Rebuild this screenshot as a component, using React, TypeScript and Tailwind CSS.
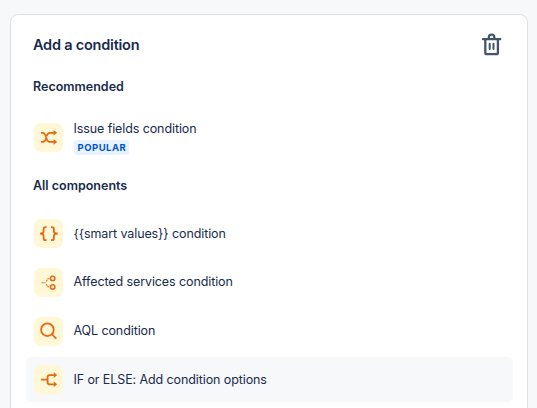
import type { ReactNode } from "react";

interface ConditionItem {
  key: string;
  label: string;
  icon: ReactNode;
  popular?: boolean;
  active?: boolean;
}

function TrashIcon() {
  return (
    <svg width="24" height="24" viewBox="0 0 24 24" fill="none" stroke="#44546f" strokeWidth="2.3">
      <path d="M3 6.2h17.2" strokeLinecap="round" />
      <path d="M5.3 6.4v13.3a1.4 1.4 0 0 0 1.4 1.4h9.8a1.4 1.4 0 0 0 1.4-1.4V6.4" />
      <path d="M8.9 6V4.1a2.7 2.5 0 0 1 5.4 0V6" />
      <path d="M9.7 10.8v5.2M13.5 10.8v5.2" strokeWidth="2" strokeLinecap="round" />
    </svg>
  );
}

function ShuffleIcon() {
  return (
    <svg width="29" height="29" viewBox="0 0 29 29" fill="none" stroke="#e56910" strokeWidth="1.7">
      <path d="M7 9.8h1.8c4.2 0 2.4 9.1 6.9 9.1h4.9M7 18.9h1.8c2 0 2.8-1.5 3.4-3.3M12.7 13.1c.6-1.9 1.1-3.3 3.1-3.3h4.8" />
      <path d="M19.6 7v5.6l3.6-2.8zM19.6 16.1v5.6l3.6-2.8z" fill="#e56910" stroke="none" />
    </svg>
  );
}

function BracesIcon() {
  return (
    <svg width="29" height="29" viewBox="0 0 29 29" fill="none" stroke="#e56910" strokeWidth="1.8">
      <path d="M12.5 8.1h-.9q-2 0-2 2v2.5q0 2-3.6 2 3.6 0 3.6 2v2.6q0 2 2 2h.9" />
      <path d="M17 8.1h.9q2 0 2 2v2.5q0 2 3.9 2-3.9 0-3.9 2v2.6q0 2-2 2H17" />
    </svg>
  );
}

function ServicesIcon() {
  return (
    <svg width="29" height="29" viewBox="0 0 29 29" fill="none" stroke="#e56910">
      <circle cx="18.7" cy="10.4" r="2.2" strokeWidth="1.5" />
      <circle cx="18.7" cy="18.9" r="2.2" strokeWidth="1.5" />
      <path d="M7.5 14.6h4.3" strokeWidth="1.4" strokeDasharray="2.2 .6" opacity=".75" />
      <path d="M12.4 13.2l1.3-2.4h2.7M12.4 16.2l1.3 2.4h2.7" strokeWidth="1.1" strokeDasharray="1.8 .7" />
    </svg>
  );
}

function SearchIcon() {
  return (
    <svg width="29" height="29" viewBox="0 0 29 29" fill="none" stroke="#e56910" strokeWidth="1.8">
      <circle cx="13.4" cy="12.7" r="6.3" />
      <path d="M17.9 17.2l3.9 3.9" strokeLinecap="round" />
    </svg>
  );
}

function BranchIcon() {
  return (
    <svg width="29" height="29" viewBox="0 0 29 29" fill="none" stroke="#e56910" strokeWidth="1.8">
      <path d="M7 14.7h6.6M20.6 10.1h-5q-2 0-2 2v5.2q0 2 2 2h5" />
      <path d="M19.8 7.3v5.6l3.4-2.8zM19.8 16.5v5.6l3.4-2.8z" fill="#e56910" stroke="none" />
    </svg>
  );
}

const recommended: ConditionItem[] = [
  { key: "issueFields", label: "Issue fields condition", icon: <ShuffleIcon />, popular: true },
];

const allComponents: ConditionItem[] = [
  { key: "smartValues", label: "{{smart values}} condition", icon: <BracesIcon /> },
  { key: "affectedServices", label: "Affected services condition", icon: <ServicesIcon /> },
  { key: "aql", label: "AQL condition", icon: <SearchIcon /> },
  { key: "ifElse", label: "IF or ELSE: Add condition options", icon: <BranchIcon />, active: true },
];

function ConditionRow({ item }: { item: ConditionItem }) {
  return (
    <button
      type="button"
      className={`flex h-[45px] w-full items-center gap-[10.5px] rounded-[5px] pl-2 text-left ${item.active ? "bg-[#f7f8f9]" : "bg-white"}`}
    >
      <span className="h-[29px] w-[29px] shrink-0 rounded-[7px] bg-[#fff7d6]">{item.icon}</span>
      <span className="flex flex-col items-start">
        <span className="text-[12.5px] leading-5 tracking-[-0.1px]">{item.label}</span>
        {item.popular && (
          <span className="mt-px mb-[2px] rounded-[3px] bg-[#e9f2ff] pr-[3px] pl-1 text-[9.5px] leading-[15px] font-bold tracking-[0.5px] text-[#0055cc]">
            POPULAR
          </span>
        )}
      </span>
    </button>
  );
}

export default function App() {
  return (
    <div className="h-[408px] overflow-hidden bg-[#f7f8f9] pt-[14px] pr-[9px] pl-[10px] font-['Inter',sans-serif] text-[#172b4d]">
      <div className="h-[420px] rounded-lg border border-[#dcdfe4] bg-white pr-[14px] pl-[15px]">
        <div className="flex h-[60px] items-center justify-between pr-[9px] pl-[7px]">
          <h1 className="text-[14.5px] leading-5 font-semibold tracking-[-0.22px]">Add a condition</h1>
          <button type="button" aria-label="Delete condition">
            <TrashIcon />
          </button>
        </div>

        {/* Recommended */}
        <h2 className="pl-[7px] text-[12.5px] leading-6 font-semibold">Recommended</h2>
        <div className="mt-4">
          {recommended.map((item) => (
            <ConditionRow key={item.key} item={item} />
          ))}
        </div>

        {/* All components */}
        <h2 className="mt-[14px] pl-[7px] text-[12.5px] leading-6 font-semibold">All components</h2>
        <div className="mt-[13px] flex flex-col gap-[3.8px]">
          {allComponents.map((item) => (
            <ConditionRow key={item.key} item={item} />
          ))}
        </div>
      </div>
    </div>
  );
}
